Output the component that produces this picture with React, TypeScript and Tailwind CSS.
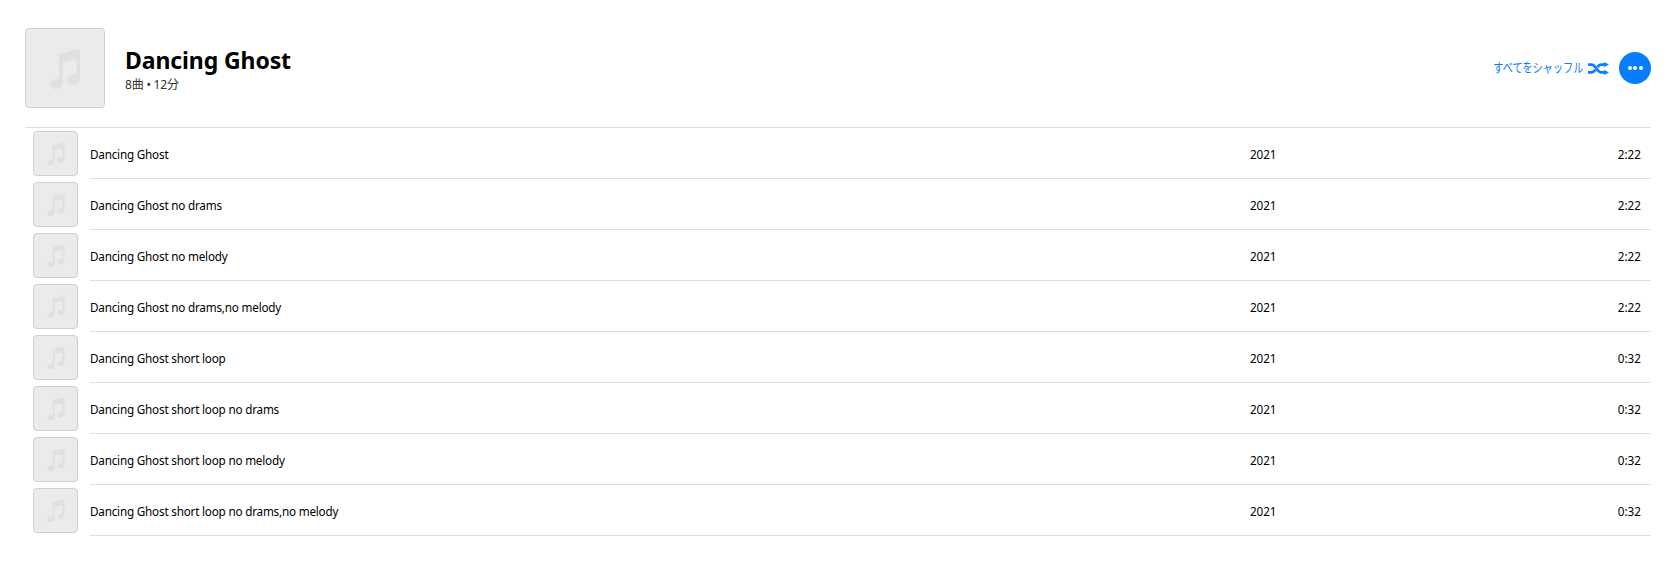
import React from "react";

const tracks = [
  ["Dancing Ghost", "2:22"],
  ["Dancing Ghost no drams", "2:22"],
  ["Dancing Ghost no melody", "2:22"],
  ["Dancing Ghost no drams,no melody", "2:22"],
  ["Dancing Ghost short loop", "0:32"],
  ["Dancing Ghost short loop no drams", "0:32"],
  ["Dancing Ghost short loop no melody", "0:32"],
  ["Dancing Ghost short loop no drams,no melody", "0:32"],
];

function Note({ className }: { className: string }) {
  return (
    <svg viewBox="0 0 32 41" className={className} fill="#e0e0e0">
      <path d="M10 5.5 L31 1 V30 C31 34 27.5 36.5 24 36.5 C20.8 36.5 18.7 34.8 18.7 32.2 C18.7 29 21.6 27.2 24.5 26.8 C26 26.6 27.4 26.4 27.4 25 V11 L13.6 14 V35 C13.6 39 10 41 6.4 41 C3 41 1 39.2 1 36.8 C1 33.6 4 31.6 7 31.2 C8.6 31 10 30.8 10 29.4 Z" />
    </svg>
  );
}

export default function App() {
  return (
    <div className="w-[1674px] h-[583px] bg-white text-black font-['Noto_Sans','Noto_Sans_CJK_JP',sans-serif] overflow-hidden">
      <header className="h-[127px] pl-[25px] pr-[23px] pt-[28px] flex items-start">
        <div className="w-[80px] h-[80px] bg-[#ebebeb] border border-[#cfcfcf] rounded-[4px] flex items-center justify-center">
          <Note className="w-[32px] h-[41px]" />
        </div>
        <div className="ml-[20px] pt-[18px]">
          <h1 className="text-[23px] leading-[28px] font-bold tracking-[-0.1px]">Dancing Ghost</h1>
          <p className="text-[12px] leading-[16px] mt-[3px] text-[#333] tracking-[-0.2px]">8曲 • 12分</p>
        </div>
        <div className="ml-auto mt-[24px] flex items-center">
          <span className="text-[13px] text-[#0a7cff] scale-x-[0.78] origin-right">すべてをシャッフル</span>
          <svg viewBox="0 0 24 15" className="w-[21px] h-[13px] ml-[5px]" fill="none" stroke="#0a7cff" strokeWidth="3.2">
            <path d="M0 3h4c4.500 0 6.500 9 11 9h4M0 12h4c1.800 0 3.100-1.300 4.200-2.900M10.800 5.900c1.100-1.600 2.400-2.900 4.200-2.900h4" />
            <path d="M18.500 0 L24 3 L18.500 6Z M18.500 9 L24 12 L18.500 15Z" fill="#0a7cff" strokeWidth="0" />
          </svg>
          <button className="ml-[10px] w-[32px] h-[32px] rounded-full bg-[#0a7cff] flex items-center justify-center gap-[1.5px]">
            <i className="w-[4px] h-[4px] rounded-full bg-white" />
            <i className="w-[4px] h-[4px] rounded-full bg-white" />
            <i className="w-[4px] h-[4px] rounded-full bg-white" />
          </button>
        </div>
      </header>
      <ul className="ml-[25px] mr-[23px] border-t border-[#dedede]">
        {tracks.map(([name, time]) => (
          <li key={name} className="h-[51px] pl-[8px] flex items-center">
            <div className="w-[45px] h-[45px] shrink-0 bg-[#ebebeb] border border-[#cfcfcf] rounded-[4px] flex items-center justify-center">
              <Note className="w-[18px] h-[23px]" />
            </div>
            <div className="ml-[12px] h-full flex-1 flex items-center border-b border-[#dedede] text-[11.7px] text-black pt-[3px]">
              <span className="w-[1160px] tracking-[-0.2px]">{name}</span>
              <span className="tracking-[-0.1px]">2021</span>
              <span className="ml-auto mr-[10px]">{time}</span>
            </div>
          </li>
        ))}
      </ul>
    </div>
  );
}
